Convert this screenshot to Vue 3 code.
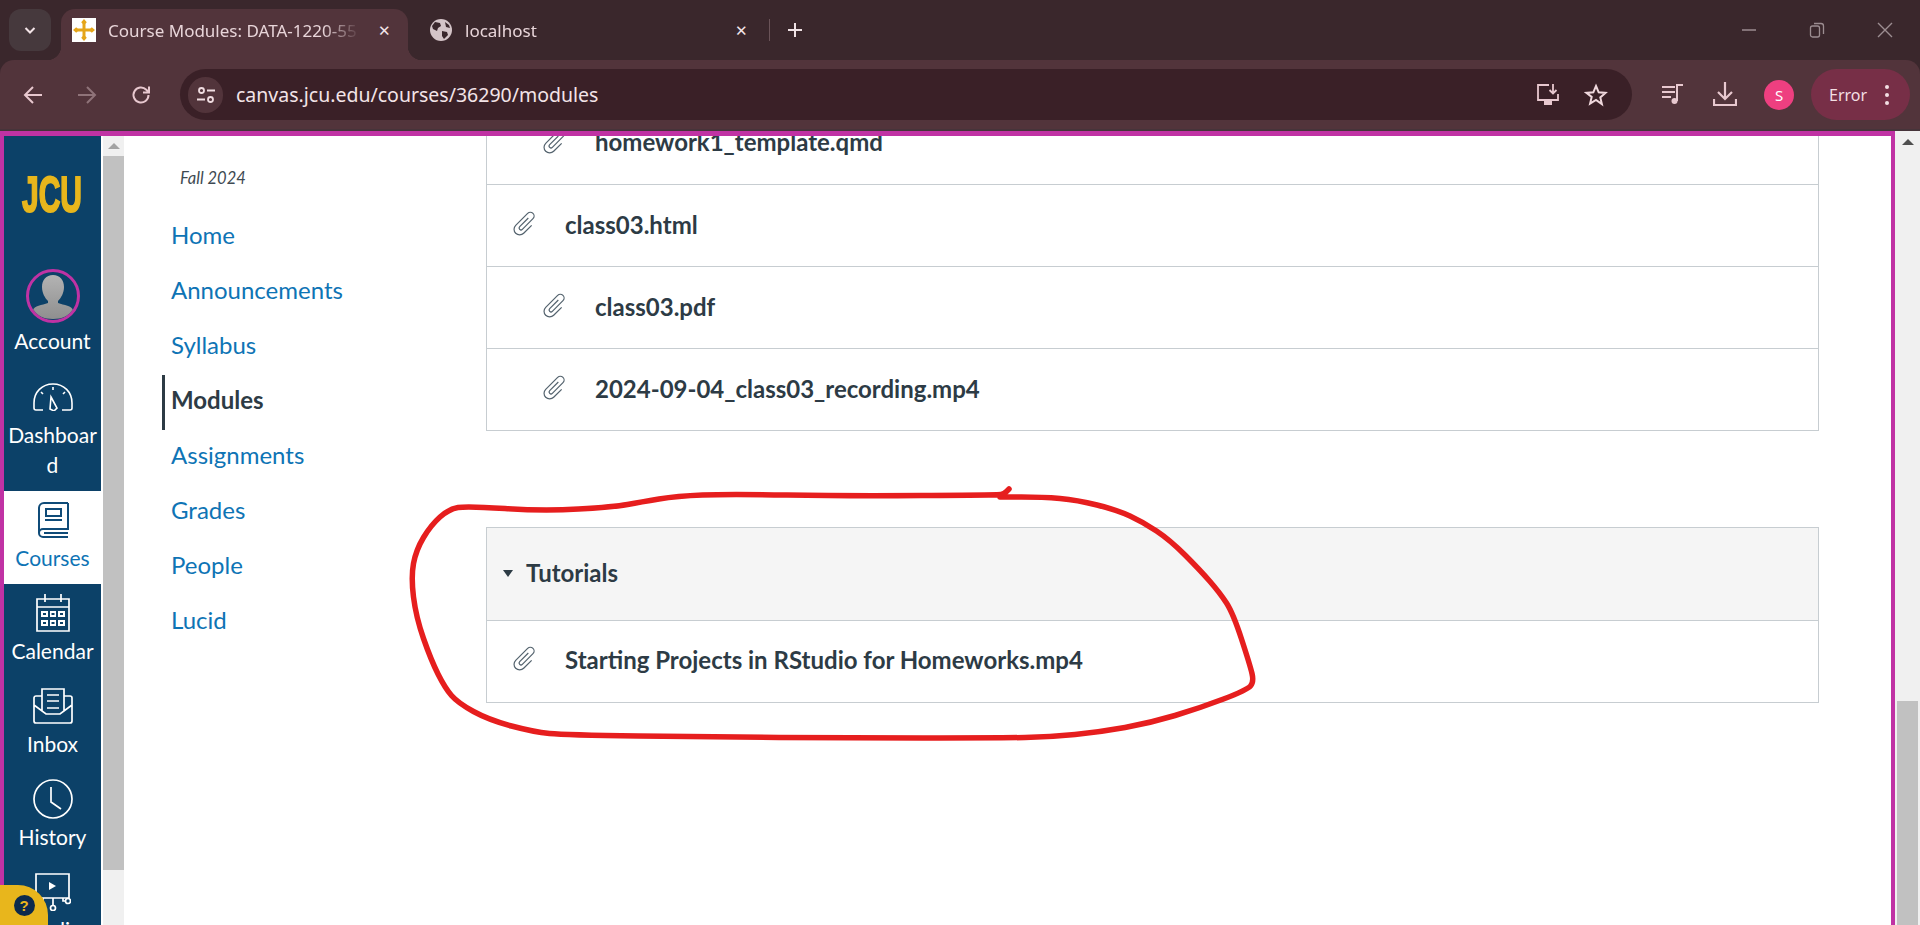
<template>
  <div class="window">
    <header class="tabstrip">
      <button class="tab-search">
        <svg width="14" height="14" viewBox="0 0 14 14"><path d="M2.5 5l4.500 4.500L11.500 5" fill="none" stroke="#f3e4e7" stroke-width="2" /></svg>
      </button>
      <div class="tab tab--active">
        <span class="favicon">
          <svg width="24" height="24" viewBox="0 0 24 24" fill="#e5a51a">
            <path d="M10.500 5h3v5.500H19v3h-5.500V19h-3v-5.500H5v-3h5.500z" />
            <path d="M12 1l2.800 3.200L12 7 9.200 4.200zM12 23l2.800-3.200L12 17l-2.800 2.800zM1 12l3.200-2.800L7 12l-2.800 2.800zM23 12l-3.200-2.800L17 12l2.800 2.800z" />
          </svg>
        </span>
        <span class="tab__title">Course Modules: DATA-1220-55</span>
        <span class="tab__close">✕</span>
      </div>
      <div class="tab">
        <svg class="globe" width="22" height="22" viewBox="0 0 22 22">
          <circle cx="11" cy="11" r="11" fill="#d4c4c8" />
          <path d="M5 3l5 1 1 3-3 2-1 3-4-2-1-3zM12 12l5 1 1 3-4 4-2-3zM15 3l4 3 1 3-4-1z" fill="#3a272c" />
        </svg>
        <span class="tab__title tab__title--plain">localhost</span>
        <span class="tab__close">✕</span>
      </div>
      <span class="tab-sep"></span>
      <svg class="new-tab" width="16" height="16" viewBox="0 0 16 16"><path d="M8 1v14M1 8h14" stroke="#f0e2e5" stroke-width="2" /></svg>
      <div class="win-controls">
        <svg width="16" height="16" viewBox="0 0 16 16"><path d="M1 8h14" stroke="#9c8d91" stroke-width="1.500" /></svg>
        <svg width="16" height="16" viewBox="0 0 16 16" fill="none" stroke="#9c8d91" stroke-width="1.300">
          <rect x="1.500" y="4" width="9" height="11" rx="2" />
          <path d="M5 1.500h7a2.500 2.500 0 0 1 2.500 2.500v8" />
        </svg>
        <svg width="16" height="16" viewBox="0 0 16 16"><path d="M1 1l14 14M15 1L1 15" stroke="#9c8d91" stroke-width="1.400" /></svg>
      </div>
    </header>

    <div class="toolbar">
      <svg class="nav-btn" width="22" height="22" viewBox="0 0 22 22" fill="none" stroke="#e8c8cf" stroke-width="2"><path d="M20 11H3M11 3l-8 8 8 8" /></svg>
      <svg class="nav-btn nav-btn--off" width="22" height="22" viewBox="0 0 22 22" fill="none" stroke="#8f7379" stroke-width="2"><path d="M2 11h17M11 3l8 8-8 8" /></svg>
      <svg class="nav-btn" width="22" height="22" viewBox="0 0 22 22" fill="none" stroke="#e8c8cf" stroke-width="2"><path d="M18.500 11a7.500 7.500 0 1 1-2.200-5.300L19 8.400M19 2.500v6h-6" /></svg>
      <div class="omnibox">
        <span class="site-btn">
          <svg width="20" height="20" viewBox="0 0 20 20" fill="none" stroke="#f0dde1" stroke-width="1.800">
            <circle cx="5.500" cy="5.500" r="2.500" /><path d="M11 5.500h8M1 14.500h8" /><circle cx="14.500" cy="14.500" r="2.500" />
          </svg>
        </span>
        <span class="url">canvas.jcu.edu/courses/36290/modules</span>
        <svg class="omni-icon" width="24" height="24" viewBox="0 0 24 24" fill="none" stroke="#e8c8cf" stroke-width="1.800">
          <path d="M13 2H2v15h20v-6M17 1v9M13.500 7l3.500 3.500L20.500 7" />
          <path d="M8 18h8v4H8z" fill="#e8c8cf" stroke="none" />
        </svg>
        <svg class="omni-icon" width="24" height="24" viewBox="0 0 24 24" fill="none" stroke="#f0d8dd" stroke-width="2"><path d="M12 3l2.700 6.300 6.800.6-5.200 4.500 1.600 6.700L12 17l-5.900 3.600 1.600-6.700L2.500 9.900l6.800-.6z" /></svg>
      </div>
      <svg class="tool-icon" width="24" height="24" viewBox="0 0 24 24" fill="none" stroke="#e8c8cf" stroke-width="2">
        <path d="M1 5h13M1 10h13M1 15h9M16 19V3h6" /><circle cx="13.500" cy="19" r="3" fill="#e8c8cf" stroke="none" />
      </svg>
      <svg class="tool-icon tool-icon--dl" width="24" height="26" viewBox="0 0 24 26" fill="none" stroke="#e8c8cf" stroke-width="2.200">
        <path d="M12 1v17M5 11l7 7 7-7M1 18v6h22v-6" />
      </svg>
      <span class="avatar">S</span>
      <div class="error-pill">
        <span>Error</span>
        <span class="kebab"><i></i><i></i><i></i></span>
      </div>
    </div>

    <div class="viewport">
      <div class="frame">
        <aside class="sidebar">
          <div class="logo"><span>JCU</span></div>
          <div v-for="item in sideItems" :key="item.key" class="side-item" :class="{ 'side-item--active': item.active, 'side-item--account': item.key === 'account' }">
            <span class="side-item__icon">
              <template v-if="item.key === 'account'">
                <span class="account-pic">
                  <svg width="46" height="46" viewBox="0 0 46 46">
                    <defs>
                      <linearGradient id="person" x1="0" y1="0" x2="0" y2="1">
                        <stop offset="0" stop-color="#b3b3b3" /><stop offset="1" stop-color="#8f8f8f" />
                      </linearGradient>
                    </defs>
                    <path d="M23 1c7 0 11 5 11 12 0 6-3 11-6 14v2c6 2 14 3 15 7-4 6-11 9-20 9S7 42 3 36c1-4 9-5 15-7v-2c-3-3-6-8-6-14C12 6 16 1 23 1z" fill="url(#person)" />
                  </svg>
                </span>
              </template>
              <svg v-else-if="item.key === 'dashboard'" width="40" height="28" viewBox="0 0 40 28" fill="none" stroke="currentColor" stroke-width="1.600">
                <path d="M10 27H3a2 2 0 0 1-2-2v-5C1 9 9 1 20 1s19 8 19 19v5a2 2 0 0 1-2 2h-8" />
                <path d="M18 14l6 11-3 3-4-2zM20 4v3M8 9l2 2M32 9l-2 2" />
              </svg>
              <svg v-else-if="item.key === 'courses'" width="32" height="36" viewBox="0 0 32 36" fill="none" stroke="#0f4b78" stroke-width="2">
                <path d="M31 1H7a5 5 0 0 0-5 5v25a4 4 0 0 0 4 4h25M31 1v26H6a4 4 0 0 0-4 4" />
                <rect x="9" y="7" width="15" height="7" />
                <path d="M8 18h17M7 31h24" />
              </svg>
              <svg v-else-if="item.key === 'calendar'" width="34" height="38" viewBox="0 0 34 38" fill="none" stroke="currentColor" stroke-width="1.700">
                <path d="M1 5h32v32H1zM1 13h32M9 0v8M25 0v8" />
                <g fill="currentColor" stroke="none">
                  <path d="M5 17h7v6H5zM14 17h6v6h-6zM22 17h7v6h-7zM5 26h7v6H5zM14 26h6v6h-6zM22 26h7v6h-7z" />
                </g>
                <g fill="#0c4168" stroke="none">
                  <path d="M7 19h3v2H7zM15.500 19h3v2h-3zM24 19h3v2h-3zM7 28h3v2H7zM15.500 28h3v2h-3zM24 28h3v2h-3z" />
                </g>
              </svg>
              <svg v-else-if="item.key === 'inbox'" width="40" height="36" viewBox="0 0 40 36" fill="none" stroke="currentColor" stroke-width="1.700">
                <path d="M9 23V1h22v22M9 8H3a2 2 0 0 0-2 2v23a2 2 0 0 0 2 2h34a2 2 0 0 0 2-2V10a2 2 0 0 0-2-2h-6M1 17l12 9h14l12-9M14 7h12M14 13h12M14 20h12" />
              </svg>
              <svg v-else-if="item.key === 'history'" width="40" height="40" viewBox="0 0 40 40" fill="none" stroke="currentColor" stroke-width="1.700">
                <circle cx="20" cy="20" r="19" /><path d="M18 8v15l10 7" />
              </svg>
              <svg v-else width="36" height="38" viewBox="0 0 36 38" fill="none" stroke="currentColor" stroke-width="1.700">
                <path d="M1 1h33v24H1zM18 25v7M8 25v3l-3 3M28 25v3h3" />
                <circle cx="18" cy="35" r="2.500" /><circle cx="5" cy="33" r="2.500" /><circle cx="33" cy="28" r="2.500" />
                <path d="M14 9l7 4-7 4z" fill="currentColor" stroke="none" />
              </svg>
            </span>
            <span class="side-item__label">{{ item.label }}</span>
          </div>
        </aside>

        <div class="help-badge">
          <span class="help-badge__dot">?</span>
        </div>

        <div class="nav-scroll">
          <div class="nav-scroll__up"><i></i></div>
          <div class="nav-scroll__thumb"></div>
        </div>

        <div class="page">
          <nav class="course-nav">
            <div class="term">Fall 2024</div>
            <ul class="course-nav__list">
              <li v-for="link in courseLinks" :key="link" class="course-nav__item" :class="{ 'course-nav__item--active': link === 'Modules' }">{{ link }}</li>
            </ul>
          </nav>

          <main class="modules">
            <section class="module module--first">
              <div v-for="row in rows" :key="row.title" class="row" :class="{ 'row--indent': row.indent }">
                <svg class="clip" width="24" height="24" viewBox="0 0 24 24" fill="none" stroke="#54636e" stroke-width="1.300">
                  <path d="M11 5V18a2 2 0 0 0 4 0V2a4 4 0 0 0-8 0V20a6 6 0 0 0 12 0V8" transform="rotate(45 12 12) translate(12 12) scale(.94) translate(-13 -12)" />
                </svg>
                <span class="row__title">{{ row.title }}</span>
              </div>
            </section>

            <section class="module module--tutorials">
              <div class="module__header">
                <span class="caret"></span>
                <span class="module__name">Tutorials</span>
              </div>
              <div class="row">
                <svg class="clip" width="24" height="24" viewBox="0 0 24 24" fill="none" stroke="#54636e" stroke-width="1.300">
                  <path d="M11 5V18a2 2 0 0 0 4 0V2a4 4 0 0 0-8 0V20a6 6 0 0 0 12 0V8" transform="rotate(45 12 12) translate(12 12) scale(.94) translate(-13 -12)" />
                </svg>
                <span class="row__title">Starting Projects in RStudio for Homeworks.mp4</span>
              </div>
            </section>
          </main>

          <!-- hand drawn annotation over the page, coords relative to .page -->
          <svg class="scribble" width="1767" height="789" viewBox="124 136 1767 789">
            <path :d="scribble" fill="none" stroke="#e61e1e" stroke-width="5.500" stroke-linecap="round" stroke-linejoin="round" />
          </svg>
        </div>
      </div>

      <div class="page-scroll">
        <div class="page-scroll__up"></div>
        <div class="page-scroll__thumb"></div>
      </div>
    </div>
  </div>
</template>

<script setup>
const sideItems = [
  { key: 'account', label: 'Account' },
  { key: 'dashboard', label: 'Dashboard' },
  { key: 'courses', label: 'Courses', active: true },
  { key: 'calendar', label: 'Calendar' },
  { key: 'inbox', label: 'Inbox' },
  { key: 'history', label: 'History' },
  { key: 'studio', label: 'Studio' },
];

const courseLinks = ['Home', 'Announcements', 'Syllabus', 'Modules', 'Assignments', 'Grades', 'People', 'Lucid'];

const rows = [
  { title: 'homework1_template.qmd', indent: true },
  { title: 'class03.html' },
  { title: 'class03.pdf', indent: true },
  { title: '2024-09-04_class03_recording.mp4', indent: true },
];

const points = [
  [1009, 489], [1004, 494], [998, 495], [846, 496], [728, 494], [677, 496], [641, 502], [614, 507],
  [543, 511], [467, 506], [449, 509], [431, 525], [416, 550], [411, 577], [416, 617], [431, 660],
  [445, 688], [458, 703], [489, 720], [534, 732], [565, 735], [712, 737], [846, 738], [1000, 738],
  [1050, 737], [1100, 732], [1150, 723], [1200, 708], [1247, 690], [1254, 682], [1250, 665],
  [1233, 613], [1220, 593], [1200, 570], [1170, 540], [1143, 522], [1117, 510], [1077, 500],
  [1043, 497], [1000, 497],
];

// smooth line through the midpoints
const scribble = points.reduce((d, p, i) => {
  if (i === 0) return `M${p[0]} ${p[1]}`;
  const prev = points[i - 1];
  return `${d} Q${prev[0]} ${prev[1]} ${(prev[0] + p[0]) / 2} ${(prev[1] + p[1]) / 2}`;
}, '') + ' L1000 497';
</script>

<style>
html,
body {
  margin: 0;
  overflow: hidden;
  background: #fff;
}
</style>

<style scoped>
.window {
  width: 1920px;
  height: 925px;
  display: flex;
  flex-direction: column;
  overflow: hidden;
  background: #3a272c;
  font-family: Lato, "Open Sans", sans-serif;
}

.tabstrip {
  height: 60px;
  background: #3a272c;
  display: flex;
  align-items: flex-end;
  padding-left: 9px;
  box-sizing: border-box;
  flex: none;
}

.tab-search {
  width: 42px;
  height: 42px;
  margin-bottom: 9px;
  border: 0;
  padding: 0;
  border-radius: 12px;
  background: #46393d;
  display: flex;
  align-items: center;
  justify-content: center;
}

.tab {
  position: relative;
  width: 347px;
  height: 51px;
  margin-left: 10px;
  padding-bottom: 9px;
  box-sizing: border-box;
  display: flex;
  align-items: center;
  padding-left: 11px;
  padding-right: 14px;
  color: #e8d5d9;
  font-family: "Noto Sans", "Open Sans", sans-serif;
  font-size: 17px;
}

.tab--active {
  background: #52343b;
  border-radius: 14px 14px 0 0;
}

/* flared bottom corners of the active tab */
.tab--active::before,
.tab--active::after {
  content: "";
  position: absolute;
  bottom: 0;
  width: 14px;
  height: 14px;
}

.tab--active::before {
  left: -14px;
  background: radial-gradient(circle at 0 0, transparent 14px, #52343b 14.500px);
}

.tab--active::after {
  right: -14px;
  background: radial-gradient(circle at 100% 0, transparent 14px, #52343b 14.500px);
}

.tab + .tab {
  margin-left: 0;
  padding-left: 22px;
  padding-right: 0;
  width: 361px;
}

.favicon {
  width: 24px;
  height: 24px;
  background: #fff;
  display: block;
  flex: none;
}

.globe {
  flex: none;
}

.tab__title {
  margin-left: 12px;
  flex: 1;
  white-space: nowrap;
  overflow: hidden;
  -webkit-mask-image: linear-gradient(90deg, #000 215px, transparent 252px);
  mask-image: linear-gradient(90deg, #000 215px, transparent 252px);
}

.tab__title--plain {
  margin-left: 13px;
}

.tab__close {
  width: 20px;
  margin-left: 6px;
  text-align: center;
  font-size: 15px;
  color: #f3e4e7;
}

.tab + .tab .tab__close {
  margin-right: 18px;
}

.tab-sep {
  width: 1px;
  height: 22px;
  margin: 0 0 19px 0;
  background: #6a5358;
}

.new-tab {
  margin: 0 0 22px 17px;
}

.win-controls {
  margin: 0 27px 22px auto;
  display: flex;
  gap: 52px;
}

.toolbar {
  position: relative;
  height: 71px;
  box-sizing: border-box;
  flex: none;
  background: #52343b;
  border-radius: 14px 14px 0 0;
  border-bottom: 2px solid #46343a;
  display: flex;
  align-items: flex-start;
  padding-top: 9px;
}

.nav-btn {
  margin: 15px 0 0 22px;
  flex: none;
}

.nav-btn--off {
  margin-left: 32px;
}

.nav-btn + .nav-btn:not(.nav-btn--off) {
  margin-left: 32px;
}

.omnibox {
  width: 1452px;
  height: 51px;
  margin-left: 28px;
  border-radius: 26px;
  background: #3a2027;
  display: flex;
  align-items: center;
  padding-left: 8px;
  box-sizing: border-box;
}

.site-btn {
  width: 35px;
  height: 36px;
  border-radius: 18px;
  background: #52343b;
  display: flex;
  align-items: center;
  justify-content: center;
}

.url {
  margin-left: 13px;
  color: #f3e4e7;
  font-family: "Noto Sans", "Open Sans", sans-serif;
  font-size: 19.500px;
  flex: 1;
}

.omni-icon {
  margin-right: 24px;
}

.tool-icon {
  margin: 13px 0 0 29px;
  flex: none;
}

.tool-icon--dl {
  margin-left: 28px;
  margin-top: 12px;
}

.avatar {
  width: 30px;
  height: 30px;
  margin: 11px 0 0 27px;
  border-radius: 50%;
  background: #ee3f80;
  color: #fff;
  font-family: "Noto Sans", sans-serif;
  font-size: 15px;
  display: flex;
  align-items: center;
  justify-content: center;
  flex: none;
}

.error-pill {
  width: 99px;
  height: 51px;
  margin-left: 17px;
  box-sizing: border-box;
  padding-left: 18px;
  border-radius: 26px;
  background: #772f47;
  color: #f3dfe3;
  font-family: "Noto Sans", sans-serif;
  font-size: 16px;
  display: flex;
  align-items: center;
  flex: none;
}

.kebab {
  margin-left: 18px;
  display: flex;
  flex-direction: column;
  gap: 4px;
}

.kebab i {
  display: block;
  width: 4px;
  height: 4px;
  border-radius: 50%;
  background: #f3dfe3;
}

.viewport {
  flex: 1;
  min-height: 0;
  display: flex;
}

.frame {
  flex: 1;
  min-width: 0;
  display: flex;
  position: relative;
  box-sizing: border-box;
  border: solid #c032a4;
  border-width: 5px 4px 0;
  background: #fff;
}

/* left global nav */
.sidebar {
  width: 97px;
  flex: none;
  background: #0c4168;
  color: #fff;
  overflow: hidden;
}

.logo {
  height: 123px;
  box-sizing: border-box;
  padding-top: 34px;
  display: flex;
  justify-content: center;
}

.logo span {
  color: #e8b61c;
  font-family: "Liberation Sans", sans-serif;
  font-weight: 700;
  font-size: 50px;
  line-height: 50px;
  -webkit-text-stroke: 2px #e8b61c;
  transform: scaleX(0.6);
}

.side-item {
  padding: 10px 0 11px;
  display: flex;
  flex-direction: column;
  align-items: center;
}

.side-item--account {
  padding-bottom: 12px;
}

.side-item--active {
  background: #fff;
  color: #0e74b5;
}

.side-item__icon {
  height: 38px;
  margin-bottom: 4px;
  display: flex;
  align-items: center;
  justify-content: center;
}

.side-item--account .side-item__icon {
  height: 54px;
  margin-bottom: 3px;
}

.account-pic {
  width: 54px;
  height: 54px;
  box-sizing: border-box;
  border: 3px solid #c032a4;
  border-radius: 50%;
  display: flex;
  justify-content: center;
  align-items: flex-end;
  overflow: hidden;
  background: #0c4168;
}

.side-item__label {
  width: 97px;
  font-size: 21px;
  line-height: 30px;
  text-align: center;
  word-break: break-all;
}

.help-badge {
  position: absolute;
  left: -4px;
  bottom: 0;
  width: 48px;
  height: 40px;
  background: #e8b61c;
  border-top-right-radius: 30px;
  display: flex;
  align-items: center;
  justify-content: center;
}

.help-badge__dot {
  width: 21px;
  height: 21px;
  border-radius: 50%;
  background: #0c2a4c;
  color: #e8b61c;
  font-family: "Liberation Sans", sans-serif;
  font-size: 15px;
  font-weight: 700;
  line-height: 21px;
  text-align: center;
}

.nav-scroll {
  width: 23px;
  flex: none;
  padding-left: 2px;
  box-sizing: border-box;
  background: linear-gradient(90deg, #fff 2px, #f0f0f0 2px);
  display: flex;
  flex-direction: column;
}

.nav-scroll__up {
  height: 20px;
  display: flex;
  justify-content: center;
  align-items: center;
}

.nav-scroll__up i {
  width: 0;
  height: 0;
  border: 6px solid transparent;
  border-top: 0;
  border-bottom: 6px solid #a3a3a3;
}

.nav-scroll__thumb {
  height: 714px;
  background: #c1c1c1;
}

/* course area */
.page {
  flex: 1;
  min-width: 0;
  display: flex;
  position: relative;
  overflow: hidden;
}

.course-nav {
  width: 362px;
  flex: none;
  box-sizing: border-box;
  padding: 30px 0 0 38px;
}

.term {
  margin-left: 18px;
  font-size: 16.500px;
  line-height: 24px;
  font-style: italic;
  color: #3e4a52;
}

.course-nav__list {
  list-style: none;
  margin: 20px 0 0;
  padding: 0;
}

.course-nav__item {
  height: 55px;
  line-height: 50px;
  box-sizing: border-box;
  border-left: 3px solid transparent;
  padding-left: 6px;
  font-size: 24px;
  color: #0e74b5;
}

.course-nav__item--active {
  border-left-color: #2d3b45;
  color: #2d3b45;
  font-weight: 700;
}

.modules {
  flex: 1;
  min-width: 0;
  margin-top: -34px;
  padding-right: 72px;
}

.module {
  border: solid #c7cdd1;
  border-width: 0 1px 1px;
}

.module--tutorials {
  margin-top: 96px;
  border-top-width: 1px;
}

.module__header {
  height: 93px;
  box-sizing: border-box;
  background: #f5f5f5;
  border-bottom: 1px solid #c7cdd1;
  padding: 0 0 4px 16px;
  display: flex;
  align-items: center;
  color: #2d3b45;
}

.caret {
  width: 0;
  height: 0;
  border: 5px solid transparent;
  border-bottom: 0;
  border-top: 7px solid #2d3b45;
  margin-top: 2px;
}

.module__name {
  margin-left: 13px;
  font-size: 24px;
  font-weight: 700;
}

.row {
  height: 82px;
  box-sizing: border-box;
  display: flex;
  align-items: center;
  padding: 0 0 3px 26px;
  border-top: 1px solid #c7cdd1;
  color: #2d3b45;
}

.row:first-child {
  border-top: 0;
}

.module__header + .row {
  border-top: 0;
  height: 81px;
  padding-bottom: 5px;
}

.row--indent {
  padding-left: 56px;
}

.clip {
  flex: none;
  overflow: visible;
}

.row__title {
  margin-left: 28px;
  font-size: 24px;
  font-weight: 700;
}

.scribble {
  position: absolute;
  left: 0;
  top: 0;
  pointer-events: none;
}

.page-scroll {
  width: 25px;
  flex: none;
  background: #f0f0f0;
  position: relative;
}

.page-scroll__up {
  width: 0;
  height: 0;
  margin: 8px 0 0 7px;
  border: 6px solid transparent;
  border-top: 0;
  border-bottom: 6px solid #4f4f4f;
}

.page-scroll__thumb {
  position: absolute;
  left: 2px;
  right: 2px;
  top: 570px;
  bottom: 0;
  background: #c1c1c1;
}
</style>
